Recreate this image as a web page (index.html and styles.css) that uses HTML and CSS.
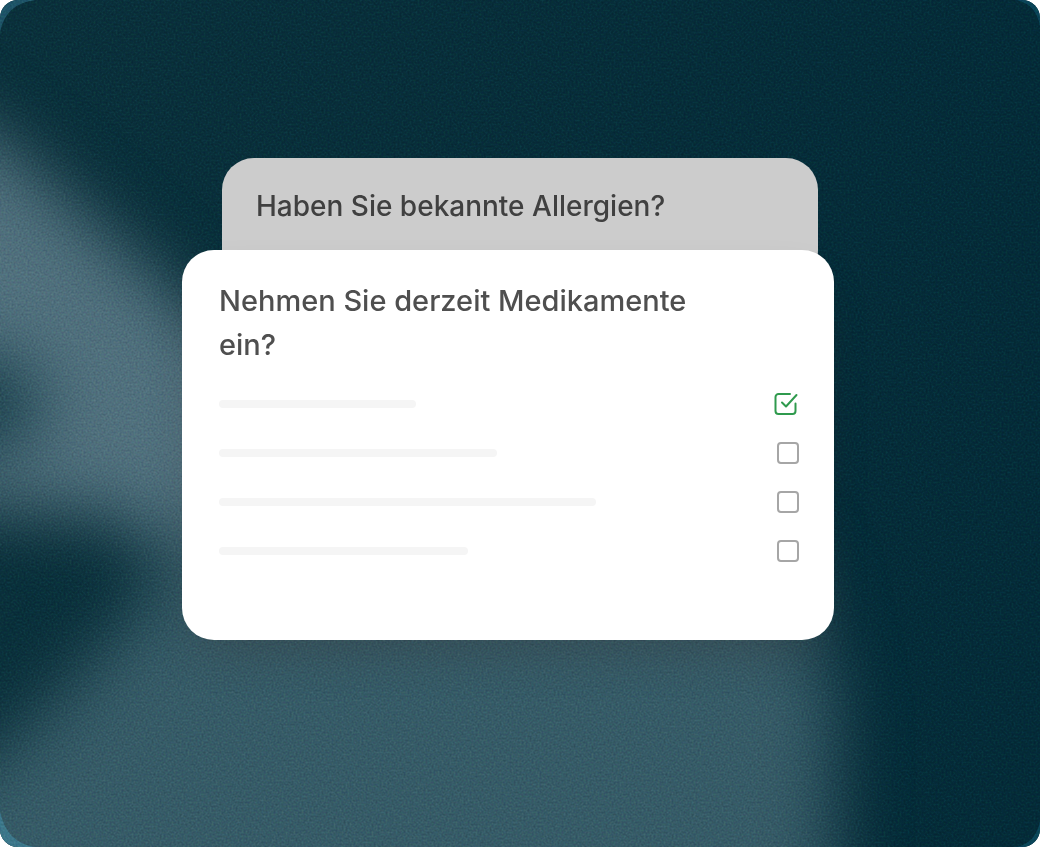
FILE: index.html
```
<!DOCTYPE html>
<html lang="de">
  <head>
    <meta charset="utf-8">
    <meta name="viewport" content="width=device-width, initial-scale=1">
    <title>Anamnese</title>
    <link rel="stylesheet" href="styles.css">
  </head>
  <body>
    <main class="scene">
      <svg class="backdrop" viewBox="0 0 1040 847" preserveAspectRatio="none" aria-hidden="true">
        <defs>
          <filter id="soft" x="-50%" y="-50%" width="200%" height="200%" color-interpolation-filters="sRGB">
            <feGaussianBlur stdDeviation="34"/>
          </filter>
          <filter id="grain" x="0" y="0" width="100%" height="100%" color-interpolation-filters="sRGB">
            <feTurbulence type="fractalNoise" baseFrequency="0.5" numOctaves="2" seed="4"/>
            <feColorMatrix type="saturate" values="0.4"/>
            <feComponentTransfer>
              <feFuncA type="linear" slope="0" intercept="1"/>
            </feComponentTransfer>
          </filter>
          <linearGradient id="base" x1="0" x2="1">
            <stop offset="0" stop-color="#0a303b"/>
            <stop offset="1" stop-color="#042b38"/>
          </linearGradient>
        </defs>
        <rect width="1040" height="847" fill="url(#base)"/>
        <g filter="url(#soft)">
          <path d="M-80 100 L0 142 L110 238 L220 335 L420 430 L420 600 L200 570 L110 515 L-80 505 Z" fill="#50707d"/>
          <path d="M190 530 L500 480 L800 560 L834 700 L834 950 L-100 950 L-100 830 L40 715 L130 620 Z" fill="#365b67"/>
          <ellipse cx="-24" cy="405" rx="64" ry="50" fill="#153c48"/>
        </g>
        <!-- lighter rim in the corners -->
        <path d="M0 0 H36 Q6 3 0 32 Z" fill="#1d5367"/>
        <path d="M0 847 H34 Q6 842 0 811 Z" fill="#3c778a"/>
        <path d="M1040 0 H1016 Q1036 4 1040 26 Z M1040 847 H1016 Q1036 843 1040 821 Z" fill="#0a4558"/>
        <rect class="grain" width="1040" height="847" filter="url(#grain)"/>
      </svg>

      <div class="stack">
        <section class="card card-back">
          <h2>Haben Sie bekannte Allergien?</h2>
        </section>

        <form class="card card-front">
          <h2>Nehmen Sie derzeit Medikamente ein?</h2>
          <ul class="options">
            <li><label><span class="bar bar-1"></span><input type="checkbox" aria-label="Antwort 1" checked></label></li>
            <li><label><span class="bar bar-2"></span><input type="checkbox" aria-label="Antwort 2"></label></li>
            <li><label><span class="bar bar-3"></span><input type="checkbox" aria-label="Antwort 3"></label></li>
            <li><label><span class="bar bar-4"></span><input type="checkbox" aria-label="Antwort 4"></label></li>
          </ul>
        </form>
      </div>
    </main>
  </body>
</html>
```
FILE: styles.css
```
* {
  box-sizing: border-box;
}

body {
  margin: 0;
  background: #fff;
  font-family: Inter, "Liberation Sans", sans-serif;
}

.scene {
  display: grid;
  min-height: 100vh;
  border-radius: 18px;
  overflow: hidden;
}

/* backdrop and content share one grid cell */
.backdrop,
.stack {
  grid-area: 1 / 1;
  min-width: 0;
  min-height: 0;
}

.backdrop {
  width: 100%;
  height: 100%;
}

.grain {
  opacity: 0.4;
  mix-blend-mode: soft-light;
}

.stack {
  z-index: 1;
  padding: 158px 206px 0 182px;
}

.card {
  border-radius: 32px;
}

.card-back {
  margin: 0 16px 0 40px;
  padding: 26px 34px 54px;
  background: #ccc;
}

.card-front {
  margin-top: -32px;
  padding: 29px 35px 65px 37px;
  background: #fff;
  box-shadow: 0 24px 48px -16px rgba(50, 40, 40, 0.3);
}

h2 {
  max-width: 500px;
  margin: 0;
  font-size: 29px;
  font-weight: 500;
  line-height: 44px;
  color: #4f4f4f;
}

.card-back h2 {
  font-size: 28px;
  color: #404040;
}

.options {
  margin: 12px 0 0;
  padding: 0;
  list-style: none;
}

label {
  display: flex;
  align-items: center;
  justify-content: space-between;
  height: 49px;
}

.bar {
  height: 8px;
  border-radius: 4px;
  background: #f5f5f5;
}

.bar-1 {
  width: 34%;
}

.bar-2 {
  width: 48%;
}

.bar-3 {
  width: 65%;
}

.bar-4 {
  width: 43%;
}

input {
  appearance: none;
  width: 22px;
  height: 22px;
  margin: 0;
  border: 2px solid #a6a6a6;
  border-radius: 4px;
}

input:checked {
  width: 25px;
  height: 24px;
  border: 0;
  background: url("data:image/svg+xml,%3Csvg xmlns='http://www.w3.org/2000/svg' viewBox='0 0 25 24' fill='none' stroke='%232f9a4d' stroke-width='2' stroke-linecap='round' stroke-linejoin='round'%3E%3Cpath d='M16 2H4.500a3 3 0 0 0-3 3v14a3 3 0 0 0 3 3h14a3 3 0 0 0 3-3v-7.500'/%3E%3Cpath d='M8 10.500l4 4L22.500 3'/%3E%3C/svg%3E") no-repeat;
}
```
